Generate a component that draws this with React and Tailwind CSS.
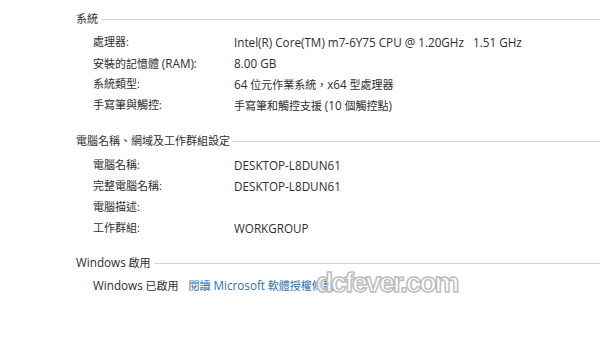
// Latin runs are set a touch larger than the CJK text, like Segoe UI next to Microsoft JhengHei
const L = ({ children }) => <span className="text-[11.7px]">{children}</span>;

const systemRows = [
  ["處理器:", <L>Intel(R) Core(TM) m7-6Y75 CPU @ 1.20GHz{"\u00a0\u00a0\u00a0"}1.51 GHz</L>],
  [<>安裝的記憶體 <L>(RAM):</L></>, <L>8.00 GB</L>],
  ["系統類型:", <><L>64</L> 位元作業系統，<L>x64</L> 型處理器</>],
  ["手寫筆與觸控:", <>手寫筆和觸控支援 <L>(10</L> 個觸控點<L>)</L></>],
];

const nameRows = [
  ["電腦名稱:", <L>DESKTOP-L8DUN61</L>],
  ["完整電腦名稱:", <L>DESKTOP-L8DUN61</L>],
  ["電腦描述:", ""],
  ["工作群組:", <L>WORKGROUP</L>],
];

function Heading({ children, className = "" }) {
  return (
    <div className={`flex items-center h-[20px] ${className}`}>
      <span className="pr-[3px] whitespace-nowrap">{children}</span>
      <div className="flex-1 h-px bg-[#d6d6d6]" />
    </div>
  );
}

function Row({ label, value }) {
  return (
    <div className="flex h-[21px] items-center pl-[17px] whitespace-nowrap">
      <span className="w-[141px] shrink-0">{label}</span>
      <span>{value}</span>
    </div>
  );
}

export default function App() {
  return (
    <div
      className="relative w-[600px] h-[339px] bg-white text-[#2e2e2e] text-[11px] overflow-hidden pl-[76px] pt-[9px]"
      style={{ fontFamily: '"Open Sans", "Noto Sans CJK TC", sans-serif' }}
    >
      <Heading>系統</Heading>
      <div className="mt-[3px]">
        {systemRows.map(([l, v], i) => <Row key={i} label={l} value={v} />)}
      </div>

      <Heading className="mt-[15px]">電腦名稱、網域及工作群組設定</Heading>
      <div className="mt-[4px]">
        {nameRows.map(([l, v], i) => <Row key={i} label={l} value={v} />)}
      </div>

      <Heading className="mt-[14px]"><L>Windows</L> 啟用</Heading>
      <div className="flex h-[21px] items-center pl-[17px] mt-[2px] whitespace-nowrap">
        <span className="mr-[10px]"><L>Windows</L> 已啟用</span>
        <a className="text-[#2f6fb0]">閱讀 <L>Microsoft</L> 軟體授權條款</a>
      </div>

      {/* watermark */}
      <div
        className="absolute left-[316px] top-[269px] text-[28px] font-bold leading-none tracking-[-2px] text-white/80 [-webkit-text-stroke:1.5px_#bdbdbd]"
        style={{ fontFamily: '"Liberation Sans", sans-serif' }}
      >
        dcfever.com
      </div>
    </div>
  );
}
